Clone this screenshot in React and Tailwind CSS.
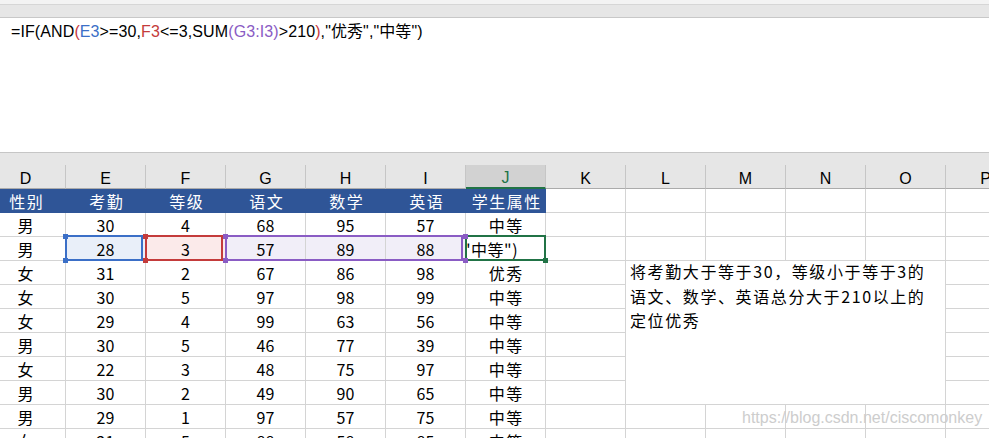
import React from "react";

const rows = [
  ["男", 30, 4, 68, 95, 57, "中等"],
  ["男", 28, 3, 57, 89, 88, "SEL"],
  ["女", 31, 2, 67, 86, 98, "优秀"],
  ["女", 30, 5, 97, 98, 99, "中等"],
  ["女", 29, 4, 99, 63, 56, "中等"],
  ["男", 30, 5, 46, 77, 39, "中等"],
  ["女", 22, 3, 48, 75, 97, "中等"],
  ["男", 30, 2, 49, 90, 65, "中等"],
  ["男", 29, 1, 97, 57, 75, "中等"],
  ["女", 21, 5, 88, 58, 85, "中等"],
];

const letters = ["D", "E", "F", "G", "H", "I", "J", "K", "L", "M", "N", "O", "P"];
const heads = ["性别", "考勤", "等级", "语文", "数学", "英语", "学生属性"];

const cell =
  "border-r border-b border-[#d4d4d4] flex items-center justify-center text-[16px] leading-[24px] text-black";

const selBg = ["", "bg-[#e9eff9]", "bg-[#fbeaea]", "bg-[#f1eef8]", "bg-[#f1eef8]", "bg-[#f1eef8]", ""];

function ColHeader({ l }) {
  const sel = l === "J";
  return (
    <div className="w-[80px] h-[36px] flex flex-col shrink-0">
      <div className="h-[12px]" />
      <div
        className={
          "flex-1 flex items-center justify-center pt-[4px] border-r border-[#c6c6c6] text-[16px] leading-[16px] font-['Liberation_Sans',sans-serif] " +
          (sel
            ? "bg-[#d2d2d2] text-[#217346] border-b-2 border-b-[#217346]"
            : "text-black border-b border-b-[#ababab]")
        }
      >
        {l}
      </div>
    </div>
  );
}

function Square({ x, y, color }) {
  return (
    <div
      className={"absolute w-[5px] h-[5px] " + color}
      style={{ left: x - 2 + 14, top: y - 2 - 189 }}
    />
  );
}

export default function App() {
  const cells = [];
  heads.forEach((h, i) => {
    cells.push(
      <div
        key={"h" + i}
        className="bg-[#2f5597] text-white flex items-center justify-center text-[16px] leading-[24px] tracking-[1.5px] pl-[1.5px]"
      >
        {h}
      </div>
    );
  });
  for (let k = 0; k < 6; k++) cells.push(<div key={"he" + k} className={cell} />);

  rows.forEach((r, ri) => {
    const rowNo = ri + 1;
    r.forEach((v, ci) => {
      const isCjk = typeof v === "string";
      if (v === "SEL") {
        cells.push(
          <div key={`r${ri}c${ci}`} className={cell + " justify-start overflow-hidden"}>
            <span className="-ml-[3px] whitespace-nowrap tracking-[0.5px] font-['Noto_Sans_CJK_SC',sans-serif]">
              "中等")
            </span>
          </div>
        );
        return;
      }
      cells.push(
        <div
          key={`r${ri}c${ci}`}
          className={
            cell +
            " font-['Noto_Sans_CJK_SC',sans-serif] " +
            (isCjk ? "tracking-[1.5px] pl-[1.5px] " : "") +
            (rowNo === 2 ? selBg[ci] : "")
          }
        >
          {v}
        </div>
      );
    });
    for (let k = 0; k < 6; k++) {
      const inBox = rowNo >= 3 && rowNo <= 8 && k >= 1 && k <= 4;
      if (inBox) continue;
      cells.push(<div key={`r${ri}e${k}`} className={cell} />);
    }
  });

  return (
    <div className="relative w-[989px] h-[438px] overflow-hidden bg-white font-['Noto_Sans_CJK_SC',sans-serif]">
      <div className="h-[5px] bg-[#f3f3f3] border-b border-[#d6d6d6]" />
      <div className="h-[13px] bg-[#e6e6e6] border-b border-[#c8c8c8]" />
      <div className="h-[135px] bg-white border-b border-[#c6c6c6] pl-[11px] pt-[2px]">
        <div className="text-[16px] leading-[24px] tracking-[0.1px] text-black whitespace-nowrap font-['Liberation_Sans','Noto_Sans_CJK_SC',sans-serif]">
          =IF(AND<span className="text-[#c8383c]">(</span>
          <span className="text-[#3b6fc7]">E3</span>&gt;=30,
          <span className="text-[#c43b3b]">F3</span>&lt;=3,SUM
          <span className="text-[#8a5cc4]">(G3:I3)</span>&gt;210
          <span className="text-[#c8383c]">)</span>,"优秀","中等")
        </div>
      </div>
      <div className="bg-[#e6e6e6] flex -ml-[14px]">
        {letters.map((l) => (
          <ColHeader key={l} l={l} />
        ))}
      </div>
      <div className="relative -ml-[14px] w-[1040px] grid grid-cols-[repeat(13,80px)] auto-rows-[24px]">
        {cells}
        <div className="col-start-9 col-span-4 row-start-4 row-span-6 bg-white border-r border-b border-[#d4d4d4] pl-[4px]">
          <div className="-mt-[2px] text-[16px] leading-[24.5px] tracking-[1.6px] text-black font-['Noto_Sans_CJK_SC',sans-serif]">
            <div className="whitespace-nowrap">将考勤大于等于30，等级小于等于3的</div>
            <div className="whitespace-nowrap">语文、数学、英语总分大于210以上的</div>
            <div className="whitespace-nowrap">定位优秀</div>
          </div>
        </div>

        <div className="absolute left-[79px] top-[46px] w-[78px] h-[26px] border-2 border-[#3b6fc7]" />
        <div className="absolute left-[159px] top-[46px] w-[78px] h-[26px] border-2 border-[#c43b3b]" />
        <div className="absolute left-[239px] top-[46px] w-[238px] h-[26px] border-2 border-[#8a5cc4]" />
        <div className="absolute left-[479px] top-[46px] w-[81px] h-[26px] border-2 border-[#217346]" />
        <Square x={65} y={236} color="bg-[#3b6fc7]" />
        <Square x={65} y={260} color="bg-[#3b6fc7]" />
        <Square x={145} y={236} color="bg-[#c43b3b]" />
        <Square x={145} y={260} color="bg-[#c43b3b]" />
        <Square x={225} y={236} color="bg-[#8a5cc4]" />
        <Square x={225} y={260} color="bg-[#8a5cc4]" />
        <Square x={465} y={236} color="bg-[#8a5cc4]" />
        <Square x={465} y={260} color="bg-[#8a5cc4]" />
        <Square x={545} y={260} color="bg-[#217346]" />
      </div>
      <div className="absolute left-[742px] top-[410px] text-[16px] leading-[16px] text-[#cdcdcd] whitespace-nowrap font-['Liberation_Sans',sans-serif]">
        https://blog.csdn.net/ciscomonkey
      </div>
    </div>
  );
}
